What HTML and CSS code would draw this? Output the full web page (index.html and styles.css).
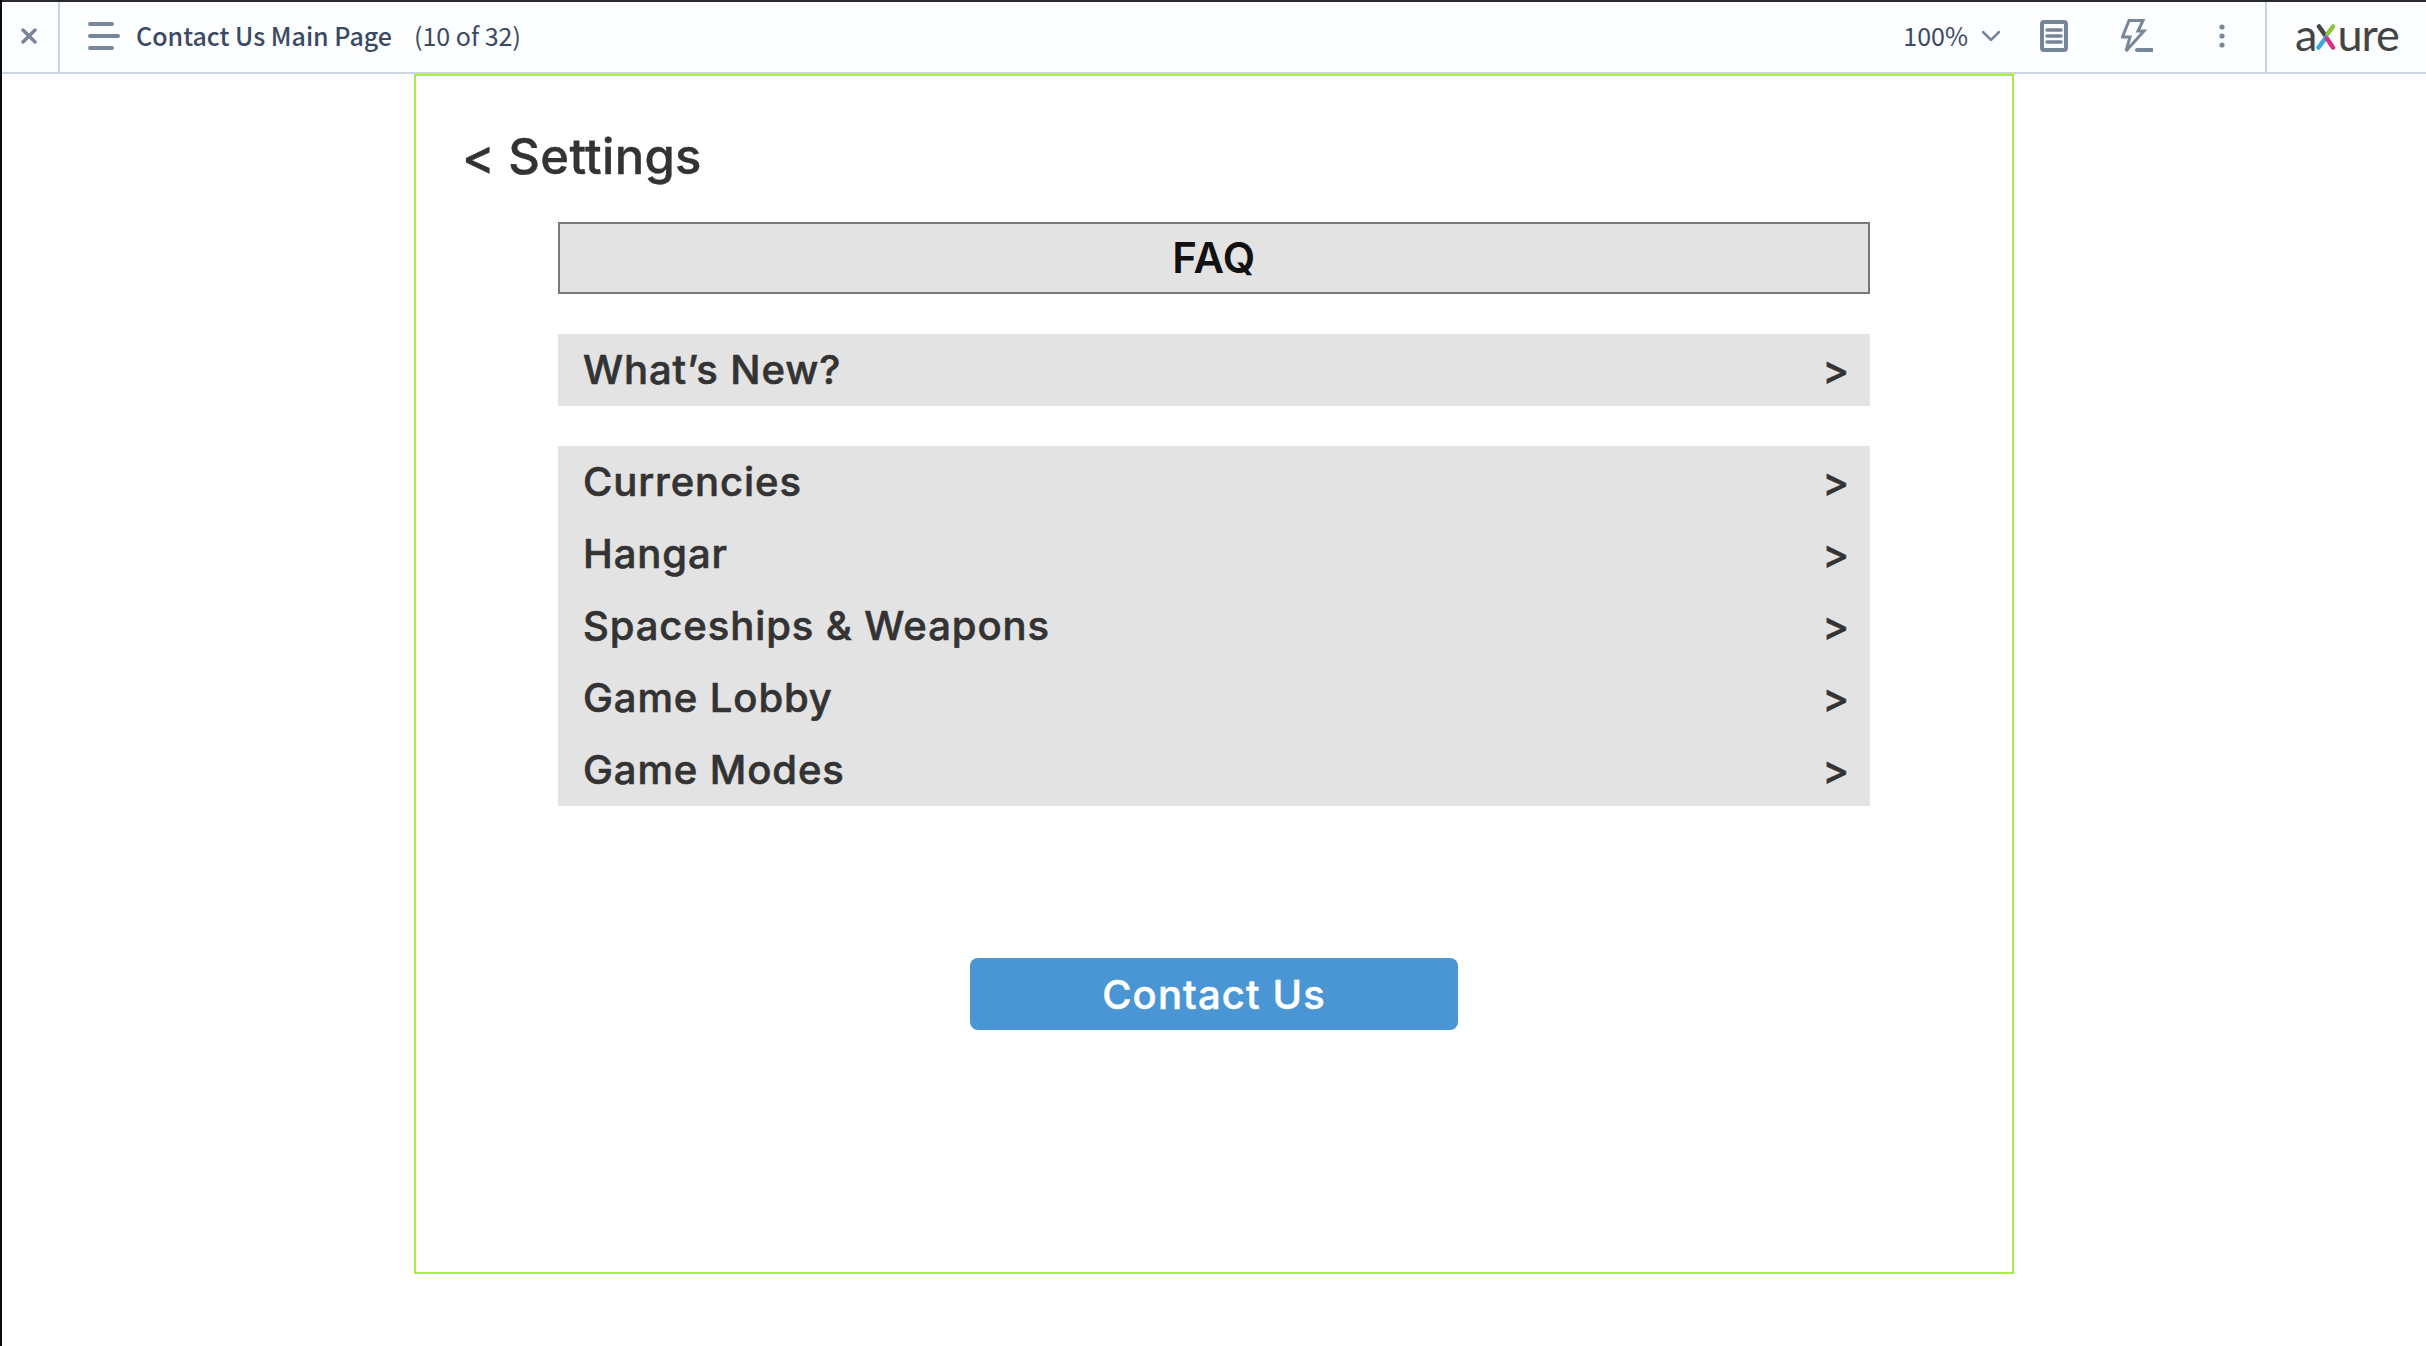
FILE: index.html
```html
<!DOCTYPE html>
<html lang="en">
<head>
  <meta charset="UTF-8" />
  <title>Contact Us Main Page</title>
  <link rel="stylesheet" href="styles.css">
</head>
<body>
  <header class="toolbar">
    <div class="close-cell">
      <svg class="icon-close" width="16" height="16" viewBox="0 0 16 16"><path d="M2 2 14 14M14 2 2 14"/></svg>
    </div>
    <div class="page-info">
      <svg class="icon-menu" width="32" height="30" viewBox="0 0 32 30"><path d="M2 3H24M2 15H30M2 27H24"/></svg>
      <span class="page-name">Contact Us Main Page</span>
      <span class="page-count">(10 of 32)</span>
    </div>
    <div class="tools">
      <span class="zoom-level">100%</span>
      <svg class="icon-chevron" width="18" height="10" viewBox="0 0 18 10"><path d="M1 1 9 9 17 1"/></svg>
      <svg class="icon-notes" width="28" height="32" viewBox="0 0 28 32">
        <rect x="2" y="2" width="24" height="28" rx="2"/>
        <path d="M7 10H21M7 16H21M7 22H21"/>
      </svg>
      <svg class="icon-bolt" width="32" height="34" viewBox="0 0 32 34">
        <path d="M8 1.500H22L17 12H23L5 32 9 18H1.500Z"/>
        <path class="bolt-line" d="M16 31H31"/>
      </svg>
      <svg class="icon-dots" width="6" height="24" viewBox="0 0 6 24">
        <circle cx="3" cy="3" r="2.600"/><circle cx="3" cy="12" r="2.600"/><circle cx="3" cy="21" r="2.600"/>
      </svg>
    </div>
    <div class="logo-cell">
      <span class="logo">a<svg class="logo-x" width="20" height="26" viewBox="0 0 20 26">
        <path class="x-dark" d="M3 2.500 9 11"/><path class="x-green" d="M17 2.500 11.500 10"/>
        <path class="x-blue" d="M2.500 23.500 10 13.500"/><path class="x-pink" d="M11 14.500 17 23.500"/>
      </svg>ure</span>
    </div>
  </header>

  <main class="frame">
    <h1 class="back-title">&lt; Settings</h1>

    <div class="faq-title">FAQ</div>

    <ul class="menu-group">
      <li class="menu-row"><span>What’s New?</span><span class="arrow">&gt;</span></li>
    </ul>

    <ul class="menu-group">
      <li class="menu-row"><span>Currencies</span><span class="arrow">&gt;</span></li>
      <li class="menu-row"><span>Hangar</span><span class="arrow">&gt;</span></li>
      <li class="menu-row"><span>Spaceships &amp; Weapons</span><span class="arrow">&gt;</span></li>
      <li class="menu-row"><span>Game Lobby</span><span class="arrow">&gt;</span></li>
      <li class="menu-row"><span>Game Modes</span><span class="arrow">&gt;</span></li>
    </ul>

    <button class="contact-btn">Contact Us</button>
  </main>
</body>
</html>
```

FILE: styles.css
```css
* { margin: 0; padding: 0; box-sizing: border-box; }
html, body { height: 100%; }
body {
  background: #fff;
  border-left: 2px solid #0a0a12;
  font-family: 'Inter', sans-serif;
  color: #333;
  overflow: hidden;
}

/* top bar */
.toolbar {
  display: flex;
  align-items: stretch;
  height: 74px;
  background: #fcfdff;
  border-top: 2px solid #2a2a2e;
  border-bottom: 2px solid #cbd5e0;
  font-family: 'Noto Sans CJK SC', sans-serif;
  color: #3a4a63;
  font-size: 25px;
}
.close-cell {
  width: 58px;
  display: flex;
  align-items: center;
  justify-content: center;
  padding-bottom: 3px;
  padding-right: 2px;
  border-right: 2px solid #cbd5e0;
}
.icon-close path, .icon-menu path, .icon-chevron path, .icon-notes path, .icon-bolt path {
  fill: none;
  stroke: #78869a;
  stroke-linecap: round;
}
.icon-close path { stroke-width: 3.500; }
.icon-menu path { stroke-width: 4; }
.icon-chevron path { stroke-width: 2.500; }
.page-info {
  flex: 1;
  display: flex;
  align-items: center;
  padding: 0 0 3px 28px;
}
.page-name { margin: 0 0 2px 16px; font-weight: 500; }
.page-count { margin: 0 0 2px 22px; font-weight: 400; }
.tools {
  display: flex;
  align-items: center;
  padding: 0 40px 3px 0;
}
.zoom-level { margin: 0 14px 2px 0; }
.icon-chevron { margin-right: 40px; }
.icon-notes { margin-right: 53px; }
.icon-notes rect { fill: none; stroke: #78869a; stroke-width: 4; }
.icon-notes path { stroke-width: 3.500; }
.icon-bolt { margin-right: 66px; }
.icon-bolt path { stroke-width: 3; stroke-linecap: butt; stroke-linejoin: miter; }
.icon-bolt .bolt-line { stroke-width: 4; stroke-linecap: round; }
.icon-dots circle { fill: #78869a; }
.logo-cell {
  width: 161px;
  display: flex;
  align-items: center;
  padding: 0 0 6px 28px;
  border-left: 2px solid #cbd5e0;
}
.logo {
  display: flex;
  align-items: center;
  font-family: 'Lato', sans-serif;
  font-size: 45px;
  line-height: 1;
  color: #444;
  letter-spacing: -1px;
}
.logo-x { margin: 6px 1px 0 0; }
.logo-x path { fill: none; stroke-width: 4.500; stroke-linecap: round; }
.x-dark { stroke: #444; }
.x-green { stroke: #8cc63f; }
.x-blue { stroke: #3fa3dc; }
.x-pink { stroke: #d9327e; }

/* prototype page */
.frame {
  width: 1600px;
  height: 1200px;
  margin: 0 auto;
  padding: 0 142px;
  border: 2px solid #a8ee4a;
  background: #fff;
  display: flex;
  flex-direction: column;
}
.back-title {
  margin-left: -96px;
  height: 146px;
  padding-top: 51px;
  font-size: 49px;
  line-height: 60px;
  font-weight: 500;
  letter-spacing: 0.3px;
  -webkit-text-stroke: 0.4px #333;
}
.faq-title {
  height: 72px;
  line-height: 68px;
  text-align: center;
  background: #e3e3e3;
  border: 2px solid #797979;
  color: #111;
  font-size: 42px;
  font-weight: 600;
  letter-spacing: 0.4px;
}
.menu-group {
  list-style: none;
  margin-top: 40px;
  background: #e3e3e3;
}
.menu-row {
  display: flex;
  justify-content: space-between;
  height: 72px;
  line-height: 72px;
  padding: 0 20px 0 25px;
  font-size: 40px;
  font-weight: 500;
  letter-spacing: 0.9px;
  -webkit-text-stroke: 0.6px #333;
}
.contact-btn {
  align-self: center;
  width: 488px;
  height: 72px;
  margin-top: 152px;
  border: none;
  border-radius: 8px;
  background: #4a96d4;
  color: #fff;
  font-family: 'Inter', sans-serif;
  font-size: 40px;
  font-weight: 500;
  letter-spacing: 1.1px;
  -webkit-text-stroke: 0.5px #fff;
}
```
